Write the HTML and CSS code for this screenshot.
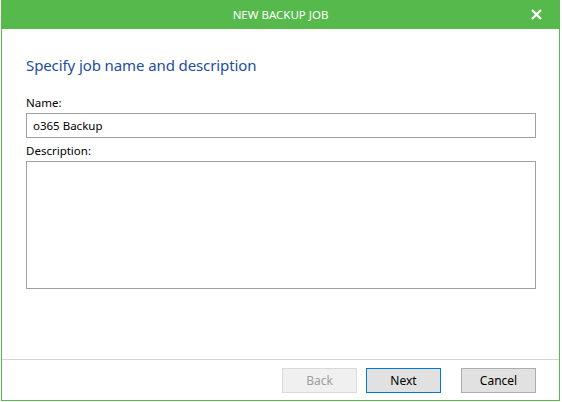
FILE: index.html
```html
<!DOCTYPE html>
<html lang="en">
<head>
    <meta charset="UTF-8">
    <title>New Backup Job</title>
    <link rel="stylesheet" href="styles.css">
</head>
<body>
    <div class="window">
        <div class="titlebar">
            <span></span>
            <span class="title">NEW BACKUP JOB</span>
            <span class="close">
                <svg width="11" height="11" viewBox="0 0 11 11">
                    <path d="M1 1 L10 10 M10 1 L1 10" stroke="#fff" stroke-width="2.2" fill="none"/>
                </svg>
            </span>
        </div>
        <div class="content">
            <h1>Specify job name and description</h1>
            <label for="name">Name:</label>
            <input type="text" id="name" value="o365 Backup">
            <label for="description">Description:</label>
            <textarea id="description"></textarea>
        </div>
        <div class="footer">
            <button class="btn back" disabled>Back</button>
            <button class="btn next">Next</button>
            <button class="btn cancel">Cancel</button>
        </div>
    </div>
</body>
</html>
```

FILE: styles.css
```css
body {
    margin: 0;
    background: #fff;
    font-family: "Noto Sans", "Open Sans", sans-serif;
    font-size: 11.5px;
    color: #000;
}
.window {
    width: 559px;
    height: 401px;
    margin-left: 1px;
    border: 1px solid #56b94b;
    border-top: 0;
    box-sizing: border-box;
    display: flex;
    flex-direction: column;
}
.titlebar {
    height: 29px;
    background: #56b94b;
    color: #fff;
    display: grid;
    grid-template-columns: 1fr auto 1fr;
    align-items: center;
    font-size: 11.5px;
}
.close {
    justify-self: end;
    padding-right: 17px;
    display: flex;
}
.content {
    flex: 1;
    padding: 25px 23px 0 24px;
    display: flex;
    flex-direction: column;
}
h1 {
    margin: 0 0 19px;
    font-size: 15px;
    font-weight: normal;
    line-height: 22px;
    letter-spacing: -0.1px;
    color: #1d4e9e;
}
label {
    display: block;
    line-height: 16px;
    margin-bottom: 2px;
}
input, textarea {
    font-family: inherit;
    font-size: 11.5px;
    border: 1px solid #a0a0a0;
    box-sizing: border-box;
    margin: 0;
    outline: none;
}
input {
    height: 25px;
    padding: 0 6px;
    margin-bottom: 5px;
}
textarea {
    height: 128px;
    resize: none;
}
.footer {
    border-top: 1px solid #d5d5d5;
    padding: 8px 23px 7px 0;
    display: flex;
    justify-content: flex-end;
}
.btn {
    width: 75px;
    height: 25px;
    font-family: inherit;
    font-size: 12px;
    background: #e1e1e1;
    border: 1px solid #adadad;
    color: #000;
    padding: 0;
}
.back {
    background: #f0f0f0;
    border-color: #d9d9d9;
    color: #9f9f9f;
}
.next {
    margin-left: 9px;
    border-color: #0078d7;
}
.cancel {
    margin-left: 20px;
}
```
